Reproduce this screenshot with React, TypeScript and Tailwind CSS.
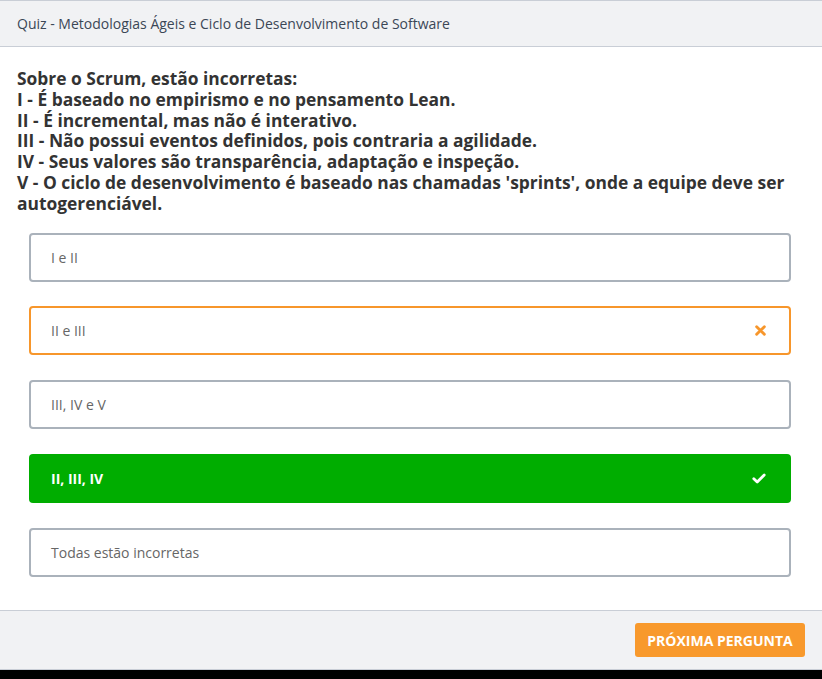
import React from "react"

const options = [
  { label: "I e II", state: "idle" },
  { label: "II e III", state: "wrong" },
  { label: "III, IV e V", state: "idle" },
  { label: "II, III, IV", state: "right" },
  { label: "Todas estão incorretas", state: "idle" },
]

function TimesIcon() {
  return (
    <svg width="11" height="11" viewBox="0 0 10 10">
      <path d="M1.5 1.5 L8.5 8.5 M8.5 1.5 L1.5 8.5" stroke="#f7962b" strokeWidth="2.6" strokeLinecap="round" />
    </svg>
  )
}

function CheckIcon() {
  return (
    <svg width="14" height="11" viewBox="0 0 14 11">
      <path d="M1.8 5.8 L5.2 9 L12.2 2" fill="none" stroke="#ffffff" strokeWidth="2.8" strokeLinecap="round" strokeLinejoin="round" />
    </svg>
  )
}

export default function App() {
  return (
    <div className="min-h-screen bg-black font-['Open_Sans',sans-serif]">
      <div className="w-[822px] h-[670px] flex flex-col bg-white">
        <div className="h-[47px] shrink-0 bg-[#f1f2f4] border-t border-b border-[#c9ced6] flex items-center px-[17px]">
          <span className="text-[14px] text-[#3b4756]">Quiz - Metodologias Ágeis e Ciclo de Desenvolvimento de Software</span>
        </div>
        <div className="flex-1 px-[17px] pt-[21px]">
          <p className="text-[17.4px] leading-[20.8px] font-bold text-[#333333]">
            Sobre o Scrum, estão incorretas:
            <br />I - É baseado no empirismo e no pensamento Lean.
            <br />II - É incremental, mas não é interativo.
            <br />III - Não possui eventos definidos, pois contraria a agilidade.
            <br />IV - Seus valores são transparência, adaptação e inspeção.
            <br />V - O ciclo de desenvolvimento é baseado nas chamadas 'sprints', onde a equipe deve ser autogerenciável.
          </p>
          <div className="mt-[19px] pl-[12px] pr-[14px] flex flex-col gap-[24.75px]">
            {options.map((o) => (
              <div
                key={o.label}
                className={
                  o.state === "right"
                    ? "h-[49px] rounded-[4px] bg-[#00ad00] flex items-center justify-between pl-[22px] pr-[25px]"
                    : o.state === "wrong"
                      ? "h-[49px] rounded-[4px] border-2 border-[#f7962b] bg-white flex items-center justify-between pl-[20px] pr-[23px]"
                      : "h-[49px] rounded-[4px] border-2 border-[#aab2bb] bg-white flex items-center justify-between pl-[20px] pr-[23px]"
                }
              >
                <span
                  className={
                    o.state === "right"
                      ? "text-[14px] font-bold text-white"
                      : "text-[14px] text-[#666666]"
                  }
                >
                  {o.label}
                </span>
                {o.state === "wrong" && <TimesIcon />}
                {o.state === "right" && <CheckIcon />}
              </div>
            ))}
          </div>
        </div>
        <div className="h-[60px] shrink-0 bg-[#f1f2f4] border-t border-b border-[#c9ced6] flex items-center justify-end px-[17px]">
          <button className="h-[34px] w-[170px] rounded-[3px] bg-[#f8992c] text-white text-[14px] font-bold">
            PRÓXIMA PERGUNTA
          </button>
        </div>
      </div>
    </div>
  )
}
